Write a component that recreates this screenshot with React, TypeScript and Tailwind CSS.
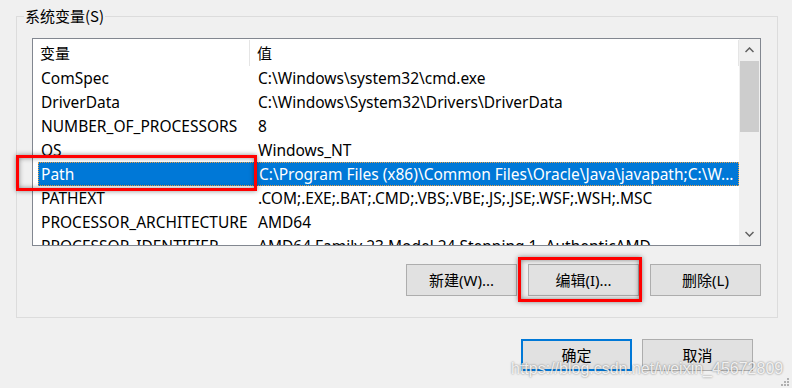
const rows: [string, string][] = [
  ['ComSpec', 'C:\\Windows\\system32\\cmd.exe'],
  ['DriverData', 'C:\\Windows\\System32\\Drivers\\DriverData'],
  ['NUMBER_OF_PROCESSORS', '8'],
  ['OS', 'Windows_NT'],
  ['Path', 'C:\\Program Files (x86)\\Common Files\\Oracle\\Java\\javapath;C:\\W...'],
  ['PATHEXT', '.COM;.EXE;.BAT;.CMD;.VBS;.VBE;.JS;.JSE;.WSF;.WSH;.MSC'],
  ['PROCESSOR_ARCHITECTURE', 'AMD64'],
  ['PROCESSOR_IDENTIFIER', 'AMD64 Family 23 Model 24 Stepping 1, AuthenticAMD'],
];

function Chevron({ up }: { up?: boolean }) {
  return (
    <svg width="9" height="6" viewBox="0 0 9 6">
      <polyline
        points={up ? '0.5,5 4.5,1 8.5,5' : '0.5,1 4.5,5 8.5,1'}
        fill="none"
        stroke="#606060"
        strokeWidth="1.5"
      />
    </svg>
  );
}

function Btn({ label, primary }: { label: string; primary?: boolean }) {
  return (
    <div
      className={
        'w-[111px] h-[32px] flex items-center justify-center bg-[#e1e1e1] text-[15px] text-black ' +
        (primary ? 'border-2 border-[#0078d7]' : 'border border-[#adadad]')
      }
    >
      {label}
    </div>
  );
}

export default function App() {
  return (
    <div className="relative w-[792px] h-[388px] overflow-hidden bg-[#f0f0f0] font-['Noto_Sans','Noto_Sans_CJK_SC',sans-serif] text-black">
      <div className="pl-[16px] pt-[16px]">
        {/* group box */}
        <div className="relative w-[762px] h-[302px] border border-[#dcdcdc] pl-[15px] pt-[21px]">
          <span className="absolute left-[7px] -top-[11px] bg-[#f0f0f0] px-[1px] text-[15px] leading-[20px] font-['Noto_Sans_CJK_SC',sans-serif]">
            系统变量(S)
          </span>

          {/* list view */}
          <div className="w-[729px] h-[208px] border border-[#828790] bg-white flex">
            <div className="flex-1 overflow-hidden text-[15.5px]">
              <div className="flex h-[27px] items-center text-[15px]">
                <div className="w-[217px] h-[26px] pl-[7px] flex items-center border-r border-[#e5e5e5] mt-[1px] font-['Noto_Sans_CJK_SC',sans-serif]">
                  变量
                </div>
                <div className="flex-1 h-[26px] pl-[7px] flex items-center border-r border-[#e5e5e5] mt-[1px] font-['Noto_Sans_CJK_SC',sans-serif]">
                  值
                </div>
              </div>
              {rows.map(([name, value]) => {
                const sel = name === 'Path';
                return (
                  <div
                    key={name}
                    className={
                      'flex h-[24px] ml-[5px] items-center pt-[2px] whitespace-nowrap ' +
                      (sel ? 'bg-[#0078d7] text-white border border-dotted border-[#e9a24a]' : '')
                    }
                  >
                    <div className={'w-[212px] overflow-hidden ' + (sel ? 'pl-[2px]' : 'pl-[3px]')}>{name}</div>
                    <div className="flex-1 pl-[8px] overflow-hidden">{value}</div>
                  </div>
                );
              })}
            </div>

            {/* scrollbar */}
            <div className="w-[21px] bg-[#f0f0f0] flex flex-col items-center">
              <div className="h-[22px] flex items-center justify-center">
                <Chevron up />
              </div>
              <div className="w-[19px] h-[71px] bg-[#cdcdcd]" />
              <div className="flex-1" />
              <div className="h-[22px] flex items-center justify-center">
                <Chevron />
              </div>
            </div>
          </div>

          <div className="flex justify-end gap-[11px] w-[729px] mt-[18px]">
            <Btn label="新建(W)..." />
            <Btn label="编辑(I)..." />
            <Btn label="删除(L)" />
          </div>
        </div>
      </div>

      <div className="flex justify-end gap-[10px] pr-[39px] mt-[21px]">
        <Btn label="确定" primary />
        <Btn label="取消" />
      </div>

      {/* annotation boxes */}
      <div className="absolute left-[16px] top-[155px] w-[241px] h-[36px] border-[3px] border-[#ff0000] shadow-[0_0_5px_rgba(0,0,0,0.45),inset_0_0_5px_rgba(0,0,0,0.45)]" />
      <div className="absolute left-[518px] top-[257px] w-[124px] h-[45px] border-[3px] border-[#ff0000] shadow-[0_0_5px_rgba(0,0,0,0.45),inset_0_0_5px_rgba(0,0,0,0.45)]" />

      {/* watermark */}
      <div className="absolute left-[511px] top-[359px] text-[16px] leading-[20px] text-white/85 font-['Liberation_Sans',sans-serif] [text-shadow:0_0_2px_rgba(0,0,0,0.55)]">
        https://blog.csdn.net/weixin_45672809
      </div>

      {/* resize grip */}
      <svg className="absolute right-[2px] bottom-[1px]" width="9" height="9" viewBox="0 0 9 9">
        <rect x="6" y="0" width="2" height="2" fill="#b0b0b0" />
        <rect x="3" y="3" width="2" height="2" fill="#b0b0b0" />
        <rect x="6" y="3" width="2" height="2" fill="#b0b0b0" />
        <rect x="0" y="6" width="2" height="2" fill="#b0b0b0" />
        <rect x="3" y="6" width="2" height="2" fill="#b0b0b0" />
        <rect x="6" y="6" width="2" height="2" fill="#b0b0b0" />
      </svg>
    </div>
  );
}
